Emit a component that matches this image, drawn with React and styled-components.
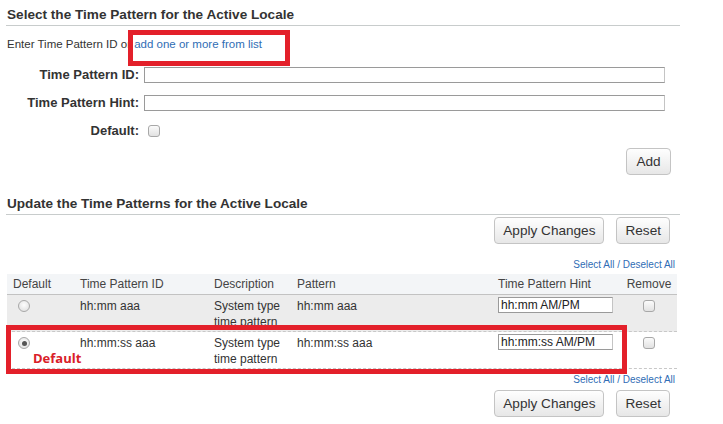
import React from "react";
import styled, { createGlobalStyle } from "styled-components";

const Global = createGlobalStyle`
  html, body { margin: 0; padding: 0; background: #fff; }
  body { font-family: "Liberation Sans", Arial, sans-serif; color: #333; }
`;

const Page = styled.div`
  position: relative;
  width: 723px;
  height: 424px;
  overflow: hidden;
  background: #fff;
`;

const Section = styled.div`
  margin-left: 6px;
  width: 674px;
  display: flex;
  flex-direction: column;
`;

const Heading = styled.div`
  font-size: 13.6px;
  font-weight: bold;
  line-height: 16px;
  color: #333;
  padding: 7px 0 2px 1px;
  border-bottom: 1px solid #c8cccc;
  margin-top: ${(p) => p.$top || 0}px;
`;

const Intro = styled.div`
  margin-top: 10px;
  padding-left: 1px;
  font-size: 11.5px;
  line-height: 16px;
  color: #333;
`;

const Link = styled.a`
  color: #2f6db5;
  text-decoration: none;
  cursor: pointer;
`;

const Form = styled.div`
  margin-top: 15px;
  display: grid;
  grid-template-columns: 133px 521px;
  column-gap: 5px;
  row-gap: 12px;
  align-items: center;
`;

const Label = styled.label`
  text-align: right;
  font-size: 13px;
  font-weight: bold;
  color: #333;
  line-height: 16px;
`;

const TextInput = styled.input`
  box-sizing: border-box;
  width: ${(p) => p.$w || 521}px;
  height: 16px;
  margin: 0;
  padding: 0 2px;
  border: 1px solid #9a9a9a;
  border-right-color: #c4c4c4;
  font-family: "Liberation Sans", Arial, sans-serif;
  font-size: 12px;
  color: #222;
  background: #fff;
  outline: none;
`;

const Check = styled.span`
  display: inline-block;
  box-sizing: border-box;
  width: 12px;
  height: 12px;
  margin-left: ${(p) => p.$ml || 0}px;
  border: 1px solid #a8a8a8;
  border-radius: 3px;
  background: linear-gradient(#fbfbfb, #e2e2e2);
`;

const CheckWrap = styled.div`
  display: flex;
  align-items: center;
  height: 16px;
`;

const ButtonRow = styled.div`
  display: flex;
  justify-content: flex-end;
  gap: 12px;
  margin-top: ${(p) => p.$top || 0}px;
  padding-right: ${(p) => p.$pr || 10}px;
`;

const Button = styled.button`
  box-sizing: border-box;
  height: 27px;
  min-width: 45px;
  padding: 0 8px;
  font-family: "Liberation Sans", Arial, sans-serif;
  font-size: 13.6px;
  color: #333;
  border: 1px solid #c4c4c4;
  border-radius: 4px;
  background: linear-gradient(#fefefe, #e7e7e7);
  cursor: pointer;
`;

const SelectLinks = styled.div`
  text-align: right;
  font-size: 10px;
  line-height: 12px;
  padding-right: 5px;
  margin-top: ${(p) => p.$top || 0}px;
  color: #2f6db5;
`;

const Table = styled.div`
  margin-top: 3px;
  margin-left: 1px;
  width: 670px;
  display: flex;
  flex-direction: column;
`;

const cols = "67px 134px 83px 201px 129px 56px";

const HeadRow = styled.div`
  display: grid;
  grid-template-columns: ${cols};
  height: 20px;
  align-items: center;
  background: #f3f5f7;
  border-bottom: 1px solid #c2c2c2;
  font-size: 12px;
  color: #444;
`;

const HeadCell = styled.div`
  padding-left: ${(p) => (p.$center ? 0 : 6)}px;
  text-align: ${(p) => (p.$center ? "center" : "left")};
  white-space: nowrap;
`;

const Row = styled.div`
  display: grid;
  grid-template-columns: ${cols};
  height: 37px;
  box-sizing: border-box;
  background: ${(p) => (p.$shade ? "#ececec" : "#fff")};
  border-bottom: 1px dashed #c8c8c8;
  font-size: 12px;
  color: #333;
  line-height: 16px;
  overflow: hidden;
`;

const Cell = styled.div`
  padding: ${(p) => p.$pt ?? 3}px 0 0 ${(p) => (p.$center ? 0 : p.$pl ?? 6)}px;
  text-align: ${(p) => (p.$center ? "center" : "left")};
`;

const Radio = styled.span`
  display: inline-block;
  box-sizing: border-box;
  width: 12px;
  height: 12px;
  border-radius: 50%;
  border: 1px solid #a8a8a8;
  background: radial-gradient(circle at 50% 40%, #fdfdfd, #dcdcdc);
  position: relative;
  margin-top: 2px;
  &::after {
    content: "";
    display: ${(p) => (p.$on ? "block" : "none")};
    position: absolute;
    left: 2.5px;
    top: 2.5px;
    width: 5px;
    height: 5px;
    border-radius: 50%;
    background: #555;
  }
`;

const RedBox = styled.div`
  position: absolute;
  box-sizing: border-box;
  border: ${(p) => p.$bw}px solid #e3202a;
  pointer-events: none;
`;

const RedLabel = styled.div`
  position: absolute;
  left: 33px;
  top: 349px;
  font-family: "Open Sans", "Liberation Sans", sans-serif;
  font-weight: bold;
  font-size: 13px;
  line-height: 18px;
  color: #d92028;
`;

const rows = [
  { id: "hh:mm aaa", hint: "hh:mm AM/PM", on: false, shade: true },
  { id: "hh:mm:ss aaa", hint: "hh:mm:ss AM/PM", on: true, shade: false },
];

export default function App() {
  return (
    <Page>
      <Global />
      <Section>
        <Heading>Select the Time Pattern for the Active Locale</Heading>
        <Intro>
          Enter Time Pattern ID or <Link>add one or more from list</Link>
        </Intro>
        <Form>
          <Label>Time Pattern ID:</Label>
          <TextInput />
          <Label>Time Pattern Hint:</Label>
          <TextInput />
          <Label>Default:</Label>
          <CheckWrap>
            <Check $ml={4} />
          </CheckWrap>
        </Form>
        <ButtonRow $top={9} $pr={9}>
          <Button>Add</Button>
        </ButtonRow>

        <Heading $top={14}>Update the Time Patterns for the Active Locale</Heading>
        <ButtonRow $top={2}>
          <Button>Apply Changes</Button>
          <Button>Reset</Button>
        </ButtonRow>
        <SelectLinks $top={15}>Select All / Deselect All</SelectLinks>
        <Table>
          <HeadRow>
            <HeadCell>Default</HeadCell>
            <HeadCell>Time Pattern ID</HeadCell>
            <HeadCell>Description</HeadCell>
            <HeadCell>Pattern</HeadCell>
            <HeadCell>Time Pattern Hint</HeadCell>
            <HeadCell $center>Remove</HeadCell>
          </HeadRow>
          {rows.map((r) => (
            <Row key={r.id} $shade={r.shade}>
              <Cell $pl={11}>
                <Radio $on={r.on} />
              </Cell>
              <Cell>{r.id}</Cell>
              <Cell>
                System type
                <br />
                time pattern
              </Cell>
              <Cell>{r.id}</Cell>
              <Cell $pt={2}>
                <TextInput $w={115} defaultValue={r.hint} />
              </Cell>
              <Cell $center $pt={5}>
                <Check />
              </Cell>
            </Row>
          ))}
        </Table>
        <SelectLinks $top={5}>Select All / Deselect All</SelectLinks>
        <ButtonRow $top={4}>
          <Button>Apply Changes</Button>
          <Button>Reset</Button>
        </ButtonRow>
      </Section>

      <RedBox $bw={5} style={{ left: 128, top: 30, width: 162, height: 36 }} />
      <RedBox $bw={5} style={{ left: 6, top: 325, width: 621, height: 49 }} />
      <RedLabel>Default</RedLabel>
    </Page>
  );
}
